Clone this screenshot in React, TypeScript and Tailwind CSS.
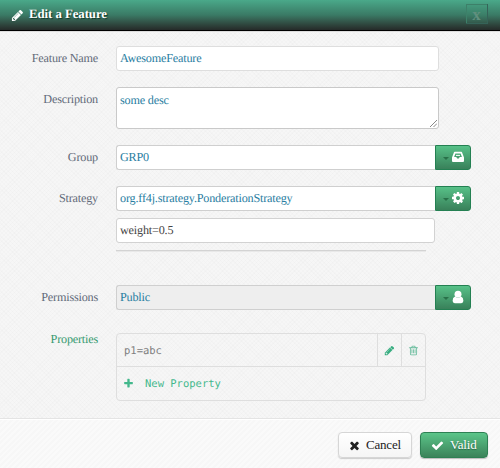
import type { ReactNode } from "react";

const paths = {
  pencil:
    "M491 1536l91-91-235-235-91 91v107h128v128h107zm523-928q0-22-22-22-10 0-17 7l-542 542q-7 7-7 17 0 22 22 22 10 0 17-7l542-542q7-7 7-17zm-54-192l416 416-832 832h-416v-416zm683 96q0 53-37 90l-166 166-416-416 166-165q36-38 90-38 53 0 91 38l235 234q37 39 37 91z",
  trash:
    "M704 736v576q0 14-9 23t-23 9h-64q-14 0-23-9t-9-23v-576q0-14 9-23t23-9h64q14 0 23 9t9 23zm256 0v576q0 14-9 23t-23 9h-64q-14 0-23-9t-9-23v-576q0-14 9-23t23-9h64q14 0 23 9t9 23zm256 0v576q0 14-9 23t-23 9h-64q-14 0-23-9t-9-23v-576q0-14 9-23t23-9h64q14 0 23 9t9 23zm128 724v-948h-896v948q0 22 7 40.5t14.5 27 10.5 8.5h832q3 0 10.5-8.5t14.5-27 7-40.5zm-672-1076h448l-48-117q-7-9-17-11h-317q-10 2-17 11zm928 32v64q0 14-9 23t-23 9h-96v948q0 83-47 143.5t-113 60.5h-832q-66 0-113-58.5t-47-141.5v-952h-96q-14 0-23-9t-9-23v-64q0-14 9-23t23-9h309l70-167q15-37 54-63t79-26h320q40 0 79 26t54 63l70 167h309q14 0 23 9t9 23z",
  gear:
    "M1152 896q0-106-75-181t-181-75-181 75-75 181 75 181 181 75 181-75 75-181zm512-109v222q0 12-8 23t-20 13l-185 28q-19 54-39 91 35 50 107 138 10 12 10 25t-9 23q-27 37-99 108t-94 71q-12 0-26-9l-138-108q-44 23-91 38-16 136-29 186-7 28-36 28h-222q-14 0-24.5-8.5t-11.5-21.5l-28-184q-49-16-90-37l-141 107q-10 9-25 9-14 0-25-11-126-114-165-168-7-10-7-23 0-12 8-23 15-21 51-66.5t54-70.5q-27-50-41-99l-183-27q-13-2-21-12.5t-8-23.5v-222q0-12 8-23t19-13l186-28q14-46 39-92-40-57-107-138-10-12-10-24 0-10 9-23 26-36 98.5-107.5t94.5-71.5q13 0 26 10l138 107q44-23 91-38 16-136 29-186 7-28 36-28h222q14 0 24.5 8.5t11.5 21.5l28 184q49 16 90 37l142-107q9-9 24-9 13 0 25 10 129 119 165 170 7 8 7 22 0 12-8 23-15 21-51 66.5t-54 70.5q26 50 41 98l183 28q13 2 21 12.5t8 23.5z",
  plus:
    "M1600 736v192q0 40-28 68t-68 28h-416v416q0 40-28 68t-68 28h-192q-40 0-68-28t-28-68v-416h-416q-40 0-68-28t-28-68v-192q0-40 28-68t68-28h416v-416q0-40 28-68t68-28h192q40 0 68 28t28 68v416h416q40 0 68 28t28 68z",
  times:
    "M1490 1322q0 40-28 68l-136 136q-28 28-68 28t-68-28l-294-294-294 294q-28 28-68 28t-68-28l-136-136q-28-28-28-68t28-68l294-294-294-294q-28-28-28-68t28-68l136-136q28-28 68-28t68 28l294 294 294-294q28-28 68-28t68 28l136 136q28 28 28 68t-28 68l-294 294 294 294q28 28 28 68z",
  check:
    "M1671 566q0 40-28 68l-724 724-136 136q-28 28-68 28t-68-28l-136-136-362-362q-28-28-28-68t28-68l136-136q28-28 68-28t68 28l294 295 656-657q28-28 68-28t68 28l136 136q28 28 28 68z",
};

function Icon({ name, className }: { name: keyof typeof paths; className: string }) {
  return (
    <svg viewBox="0 0 1792 1792" fill="currentColor" className={`shrink-0 ${className}`}>
      <path d={paths[name]} />
    </svg>
  );
}

function InboxIcon() {
  return (
    <svg viewBox="0 0 12 12" className="mb-[2px] h-3 w-3 shrink-0">
      <path
        fill="currentColor"
        fillRule="evenodd"
        d="M2.7.8h6.6q.6 0 .8.6L12 6.4V10q0 1-1 1H1q-1 0-1-1V6.4l1.9-5q.2-.6.8-.6zM3.4 2.5 2.1 6h2.2l.8 1.5h1.8L7.7 6h2.2L8.6 2.5z"
      />
      <path fill="currentColor" d="M4 3.9h4v1H4z" />
    </svg>
  );
}

function UserIcon() {
  return (
    <svg viewBox="0 0 12 14" className="mb-[2px] h-[14px] w-3 shrink-0" fill="currentColor">
      <circle cx="6" cy="4.2" r="3.5" />
      <path d="M3 6.6Q.6 7.6.6 10.8.6 13.2 2.8 13.2h6.4q2.2 0 2.2-2.4 0-3.2-2.4-4.2Q6 9.4 3 6.6z" />
    </svg>
  );
}

function Row({ label, green, className, children }: { label: string; green?: boolean; className: string; children: ReactNode }) {
  return (
    <div className={`flex items-start ${className}`}>
      <div className={`mt-[4px] w-[98px] shrink-0 text-right leading-4 ${green ? "text-[#369a70]" : "text-[#626a79]"}`}>{label}</div>
      <div className="ml-[18px]">{children}</div>
    </div>
  );
}

function PickerField({ value, disabled, children }: { value: string; disabled?: boolean; children: ReactNode }) {
  return (
    <div className="flex h-[25px]">
      <div className={`w-[319px] rounded-l-[3px] border border-r-0 border-[#cfcfcf] pl-[3px] leading-[23px] text-[#287da1] ${disabled ? "bg-[#eeeeee]" : "bg-white"}`}>
        {value}
      </div>
      <button className="flex w-[36px] items-center gap-[3px] rounded-r-[3px] border border-[#248052] bg-linear-to-b from-[#57c188] to-[#39815a] pl-[7px] text-white">
        <span className="mt-[2px] h-0 w-0 border-x-[3px] border-t-[3px] border-x-transparent border-t-[#287149]" />
        {children}
      </button>
    </div>
  );
}

export default function App() {
  return (
    <div className="flex h-[468px] w-[500px] flex-col overflow-hidden bg-[#f6f6f6] bg-[repeating-linear-gradient(45deg,#0000_0_2px,#00000003_2px_3px),repeating-linear-gradient(-45deg,#0000_0_2px,#00000003_2px_3px)] font-['Liberation_Serif',serif] text-[12.2px] tracking-[-0.2px] [text-rendering:geometricPrecision]">
      <header className="flex h-[31px] shrink-0 items-center justify-between border-b border-black bg-linear-to-b from-[#4aa98a] via-[#3a7a65] via-50% to-[#252b29] pr-[12px] pl-[11px] text-white">
        <div className="flex items-center gap-[5px] [text-shadow:1px_1px_1px_#0d382a]">
          <Icon name="pencil" className="h-[13px] w-[13px]" />
          <span className="text-[12.8px] font-bold tracking-[-0.05px]">Edit a Feature</span>
        </div>
        <button className="mt-[-3px] flex h-[20px] w-[22px] items-center justify-center border-r border-b border-[#356358] bg-[#459b7c]/15 pt-[2px] text-[17px] leading-none font-bold text-[#608f7e] shadow-[inset_1px_1px_0_#3d8069]">
          x
        </button>
      </header>

      <main className="h-[387px] shrink-0 pt-[15px] shadow-[inset_0_1px_0_#ddd]">
        <Row label="Feature Name" className="h-[41px]">
          <div className="h-[25px] w-[323px] rounded-[3px] border border-[#dedede] bg-white pl-[3px] leading-[23px] text-[#287da1]">AwesomeFeature</div>
        </Row>
        <Row label="Description" className="h-[58px]">
          <div className="flex h-[42px] w-[323px] items-end justify-between rounded-[3px] border border-[#c9c9c9] bg-white pl-[3px] text-[#287da1]">
            <span className="self-start pt-[4px] leading-4">some desc</span>
            <svg viewBox="0 0 8 8" className="m-px h-[7px] w-[7px]" stroke="#777" strokeWidth="1" fill="none">
              <path d="M0 8 8 0M4 8 8 4" />
            </svg>
          </div>
        </Row>
        <Row label="Group" className="h-[41px]">
          <PickerField value="GRP0">
            <InboxIcon />
          </PickerField>
        </Row>
        <Row label="Strategy" className="h-[99px]">
          <PickerField value="org.ff4j.strategy.PonderationStrategy">
            <Icon name="gear" className="mb-px -ml-px h-[14px] w-[14px]" />
          </PickerField>
          <div className="mt-[7px] h-[25px] w-[319px] rounded-[3px] border border-[#d2d2d2] bg-white pl-[3px] leading-[23px] text-[#444]">weight=0.5</div>
          <div className="mt-[7px] h-[2px] w-[310px] border-t border-[#d3d3d3] bg-[#e8e8e8]" />
        </Row>
        <Row label="Permissions" className="h-[42px]">
          <PickerField value="Public" disabled>
            <UserIcon />
          </PickerField>
        </Row>
        <Row label="Properties" green className="h-[80px]">
          <div className="mt-[6px] w-[310px] rounded-[4px] border border-[#dedede] font-['DejaVu_Sans_Mono',monospace] text-[10.5px] tracking-normal">
            <div className="flex h-[33px] items-stretch border-b border-[#dedede]">
              <div className="flex-1 pl-[7px] leading-[34px] text-[#808080]">p1=abc</div>
              <div className="flex w-[24px] items-center justify-center border-l border-[#dedede] text-[#37ad80]">
                <Icon name="pencil" className="h-[11px] w-[11px]" />
              </div>
              <div className="flex w-[24px] items-center justify-center border-l border-[#dedede] text-[#61b998]">
                <Icon name="trash" className="h-[11px] w-[11px]" />
              </div>
            </div>
            <div className="flex h-[33px] items-center gap-[11px] pl-[6px] text-[#43b88c]">
              <Icon name="plus" className="h-[11px] w-[11px]" />
              <span className="mt-[2px]">New Property</span>
            </div>
          </div>
        </Row>
      </main>

      <footer className="flex h-[50px] shrink-0 items-start justify-end gap-[8px] border-t border-[#e4e4e4] bg-[#fafafa] bg-[repeating-linear-gradient(-45deg,#0000_0_2px,#00000003_2px_4px)] pt-[13px] pr-[12px] text-[13px] shadow-[inset_0_1px_0_#fff]">
        <button className="flex h-[26px] w-[74px] items-center gap-[5px] rounded-[4px] border border-[#d6d6d6] bg-linear-to-b from-white to-[#f5f5f5] pl-[9px] tracking-[-0.2px] text-[#222] shadow-[0_1px_1px_#ccc]">
          <Icon name="times" className="h-[13px] w-[13px]" />
          Cancel
        </button>
        <button className="flex h-[26px] w-[68px] items-center gap-[6px] rounded-[4px] border border-[#2e8053] bg-linear-to-b from-[#5bc589] to-[#3b835a] pl-[10px] tracking-[-0.2px] text-white shadow-[0_1px_1px_#bbb] [text-shadow:0_1px_1px_#276844]">
          <Icon name="check" className="h-[13px] w-[13px]" />
          Valid
        </button>
      </footer>
    </div>
  );
}
